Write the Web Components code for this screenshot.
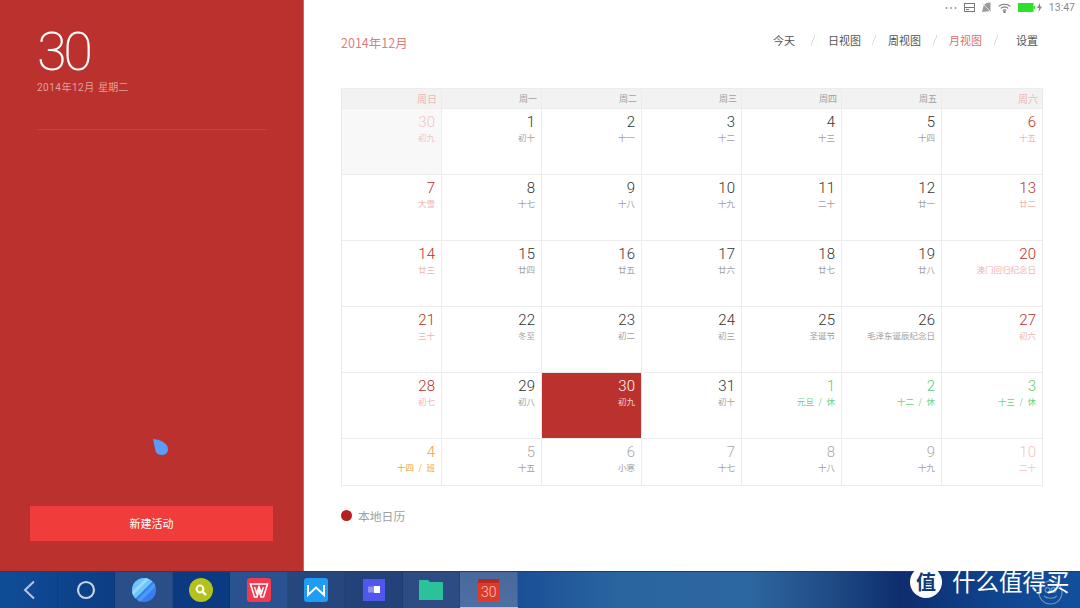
<!DOCTYPE html>
<html lang="zh-CN">

<head>
    <meta charset="UTF-8">
    <title>Calendar</title>
    <style>
        html, body { margin: 0; padding: 0; background: #fff; }
        body { font-family: "Liberation Sans", "Noto Sans CJK SC", sans-serif; }
        section { flex: 1; min-width: 0; display: flex; flex-direction: column; }
        .content { padding: 15px 37px 0; }
    </style>
</head>

<body>
    <template id="side-panel-template">
        <style>
            :host { display: flex; flex-direction: column; position: relative; width: 304px; flex: none; background: #bb312d; border-right: 1px solid #d9605c; color: #fff; box-sizing: border-box; padding: 0 30px 30px 37px; }
            .big { font: 200 54px/1 Roboto, sans-serif; letter-spacing: -3.5px; margin-top: 25px; height: 54px; }
            .date { font: 10px/14px Roboto, "Noto Sans CJK SC", sans-serif; color: #e0a09d; margin-top: 2px; }
            .date span { letter-spacing: 0.5px; margin-right: 1px; }
            hr { border: 0; height: 1px; background: #c5433f; margin: 34px 6px 0 0; }
            button { margin: auto 0 0 -7px; height: 35px; width: 243px; border: 0; background: #f03c3a; color: #fff; font: 11px "Noto Sans CJK SC", sans-serif; padding: 0 0 2px; }
            svg { position: absolute; left: 152px; top: 438px; }
        </style>
        <div class="big"><slot name="day"></slot></div>
        <div class="date"><span><slot name="date"></slot></span> <slot name="weekday"></slot></div>
        <hr>
        <svg width="17" height="18" viewBox="0 0 17 18"><path d="M1 1 C6 1.5 16 4 16 11 C16 15 13 17 9.5 17 C5.5 17 3.5 14 3 11 C2.5 7.5 1.5 4 1 1Z" fill="#5b9cf8"/></svg>
        <button><slot name="action"></slot></button>
    </template>

    <template id="status-bar-template">
        <style>
            :host { display: flex; justify-content: flex-end; align-items: center; height: 15px; padding-right: 5px; font: 10.5px Roboto, sans-serif; color: #8a8a8a; }
            svg { display: block; }
            .dots { margin-right: 7px; }
            .sim { margin-right: 6px; }
            .mute { margin-right: 6px; }
            .wifi { margin-right: 7px; }
            .bat { margin-right: 2px; }
            .bolt { margin-right: 7px; }
        </style>
        <svg class="dots" width="12" height="4" viewBox="0 0 12 4" fill="#999"><circle cx="1.5" cy="2" r="1"/><circle cx="6" cy="2" r="1"/><circle cx="10.5" cy="2" r="1"/></svg>
        <svg class="sim" width="11" height="9" viewBox="0 0 11 9"><rect x=".5" y=".5" width="10" height="8" fill="none" stroke="#777"/><rect x="1" y="4" width="9" height="1" fill="#777"/><rect x="2" y="6" width="3" height="1" fill="#777"/></svg>
        <svg class="mute" width="11" height="11" viewBox="0 0 11 11"><path d="M1 10 L2.500 4 C3.500 1.500 6 .5 9.500 .5 L9.500 9 Z" fill="#999"/><path d="M1 1 L10 10" stroke="#e2e2e2"/></svg>
        <svg class="wifi" width="13" height="10" viewBox="0 0 13 10" fill="none" stroke="#777" stroke-width="1.2"><path d="M.7 3.4 C4 .5 9 .5 12.3 3.4"/><path d="M2.7 5.4 C5 3.6 8 3.6 10.3 5.4"/><path d="M4.7 7.4 C5.8 6.6 7.2 6.6 8.3 7.4"/><circle cx="6.5" cy="9" r=".6" fill="#777"/></svg>
        <svg class="bat" width="17" height="9" viewBox="0 0 17 9"><rect width="15.5" height="9" fill="#2ee02a"/><rect x="15.5" y="3" width="1.5" height="3" fill="#2ee02a"/></svg>
        <svg class="bolt" width="5" height="9" viewBox="0 0 5 9"><path d="M3 0 L0 5 H2 L1.5 9 L5 3.5 H3Z" fill="#888"/></svg>
        <span><slot></slot></span>
    </template>

    <template id="top-nav-template">
        <style>
            :host { display: flex; justify-content: space-between; align-items: center; height: 24px; }
            .title { font: 12.5px "Noto Sans CJK SC", sans-serif; color: #dc7f7b; }
            nav { display: flex; align-items: center; padding: 0 5px 4px 0; font: 11px "Noto Sans CJK SC", sans-serif; color: #555; }
            i { display: block; width: 4px; height: 10px; background: linear-gradient(to bottom right, transparent 44%, #ddd 44%, #ddd 58%, transparent 58%); }
            .on { color: #d8716d; }
        </style>
        <span class="title"><slot name="title"></slot></span>
        <nav>
            <span>今天</span><i style="margin:0 13px 0 16px"></i>
            <span>日视图</span><i style="margin:0 12px 0 11px"></i>
            <span>周视图</span><i style="margin:0 12px"></i>
            <span class="on">月视图</span><i style="margin:0 18px 0 12px"></i>
            <span>设置</span>
        </nav>
    </template>

    <template id="day-cell-template">
        <style>
            :host { display: block; box-sizing: border-box; text-align: right; padding: 4px 6px 0 0; overflow: hidden; white-space: nowrap; border-right: 1px solid #ececec; border-bottom: 1px solid #ececec; color: #333; }
            .n { font: 300 15px/18px Roboto, sans-serif; }
            .s { font: 8.5px/12px "Noto Sans CJK SC", sans-serif; color: #a0a0a0; word-spacing: .4px; }
            :host([tone=red]) { color: #b9302c; }
            :host([tone=red]) .s { color: #f0b4b1; }
            :host([tone=old]) { color: #a8a8a8; }
            :host([tone=pale]) { color: #eec6c4; }
            :host([tone=pale]) .s { color: #eec6c4; }
            :host([tone=prev]) { color: #eec6c4; background: #f8f8f8; }
            :host([tone=prev]) .s { color: #eec6c4; }
            :host([tone=rest]) { color: #5fc975; }
            :host([tone=rest]) .s { color: #6fd085; }
            :host([tone=work]) { color: #f0a33a; }
            :host([tone=work]) .s { color: #f0a33a; }
            :host([tone=today]) { color: #fff; background: #bb312d; }
            :host([tone=today]) .s { color: #f4d5d3; }
            :host(.last) { border-right: 0; }
        </style>
        <div class="n"></div>
        <div class="s"><slot></slot></div>
    </template>

    <template id="month-grid-template">
        <style>
            :host { display: grid; grid-template-columns: repeat(7, 1fr); grid-template-rows: 20px repeat(5, 66px) 47px; width: 702px; box-sizing: border-box; margin-top: 34px; border: 1px solid #ececec; border-width: 1px 1px 0 1px; }
            .h { background: #f2f2f2; border-right: 1px solid #ececec; border-bottom: 1px solid #ececec; text-align: right; padding-right: 4px; font: 9px/19px "Noto Sans CJK SC", sans-serif; color: #a0a0a0; }
            .h:nth-child(8) { border-right: 0; }
            .h.we { font-size: 10px; color: #eeb9b6; }
        </style>
        <slot></slot>
    </template>

    <template id="legend-row-template">
        <style>
            :host { display: flex; align-items: center; margin-top: 21px; font: 11.8px "Noto Sans CJK SC", sans-serif; color: #a0a0a0; height: 16px; }
            i { width: 11px; height: 11px; border-radius: 50%; background: #b2201f; margin-right: 6px; }
        </style>
        <i></i><slot></slot>
    </template>

    <template id="task-icon-template">
        <style>
            :host { display: flex; align-items: center; justify-content: center; width: 57.5px; height: 100%; flex: none; background: var(--bg, none); box-shadow: inset -1px 0 0 rgba(10, 30, 80, .18); box-sizing: border-box; }
            :host([active]) { background: linear-gradient(#48699b, #4d6fa3); border-bottom: 1px solid #b9c6db; }
        </style>
        <slot></slot>
    </template>

    <template id="task-bar-template">
        <style>
            :host { display: flex; position: relative; height: 37px; flex: none; background: linear-gradient(90deg, #0f4d98 0, #0c3f86 100px, #0a397e 170px, #27508e 240px, #274a84 340px, #26528f 450px, #1a5097 520px, #2b659f 620px, #2d66a0 750px, #1f4a84 833px, #0d2d6e 900px, #0f4590 1000px, #12509c 1080px); border-top: 1px solid #1c3f78; box-sizing: border-box; }
            .mark { position: absolute; left: 910px; top: -6px; width: 32px; height: 32px; border-radius: 50%; background: #fff; color: #123a7c; font: 700 20px/32px "Noto Sans CJK SC", sans-serif; text-align: center; }
            .name { position: absolute; left: 952px; top: -7px; font: 400 23.5px/32px "Noto Sans CJK SC", sans-serif; color: #fff; white-space: nowrap; }
            .ring { position: absolute; right: 17px; top: 8px; width: 25px; height: 25px; }
        </style>
        <slot></slot>
        <span class="mark">值</span>
        <span class="name">什么值得买</span>
        <svg class="ring" viewBox="0 0 25 25" fill="none" stroke="#fff" stroke-opacity=".4" stroke-width="1.2"><circle cx="12.5" cy="12.5" r="11.5"/><circle cx="9.5" cy="10" r="2.4"/><circle cx="15.5" cy="10" r="2.4"/><path d="M6 16 C9 19 16 19 19 16"/></svg>
    </template>

    <cal-app-root>
        <div slot="main">
            <side-panel>
                <span slot="day">30</span>
                <span slot="date">2014年12月</span>
                <span slot="weekday">星期二</span>
                <span slot="action">新建活动</span>
            </side-panel>
            <section>
                <status-bar>13:47</status-bar>
                <div class="content">
                    <top-nav><span slot="title">2014年12月</span></top-nav>
                    <month-grid></month-grid>
                    <legend-row>本地日历</legend-row>
                </div>
            </section>
        </div>
        <task-bar slot="bar">
            <task-icon>
                <svg width="14" height="20" viewBox="0 0 14 20" fill="none" stroke="#b9c7de" stroke-width="2"><path d="M12 1.5 L3 10 L12 18.5"/></svg>
            </task-icon>
            <task-icon>
                <svg width="20" height="20" viewBox="0 0 20 20" fill="none" stroke="#c5d1e4" stroke-width="2.2"><circle cx="10" cy="10" r="8"/></svg>
            </task-icon>
            <task-icon style="--bg:#2a4f88">
                <svg width="24" height="24" viewBox="0 0 24 24"><defs><clipPath id="c1"><circle cx="12" cy="12" r="12"/></clipPath></defs><g clip-path="url(#c1)"><rect width="24" height="24" fill="#3b7cf2"/><path d="M0 24 L24 0 H0Z" fill="#6cc6fa"/><path d="M3 24 L24 3 V8 L8 24Z" fill="#4a9bf5"/><path d="M0 14 L14 0 H18 L0 18Z" fill="#9adcfb"/></g></svg>
            </task-icon>
            <task-icon style="--bg:#0b3a80">
                <svg width="24" height="24" viewBox="0 0 24 24"><circle cx="12" cy="12" r="12" fill="#b5c21c"/><circle cx="11" cy="11" r="3.4" fill="none" stroke="#fff" stroke-width="2"/><path d="M13.5 13.5 L17 17" stroke="#fff" stroke-width="2.2"/></svg>
            </task-icon>
            <task-icon style="--bg:#2a5290">
                <svg width="24" height="24" viewBox="0 0 24 24"><rect width="24" height="24" rx="3" fill="#f13a4e"/><path d="M3.5 6 H20.5 L16.5 19 H14 L12 12 L10 19 H7.500Z" fill="none" stroke="#fff" stroke-width="1.6"/><path d="M7.5 9 L9.500 15 L12 8.500 L14.500 15 L16.500 9" fill="none" stroke="#fff" stroke-width="1.500"/></svg>
            </task-icon>
            <task-icon style="--bg:#26467e">
                <svg width="24" height="24" viewBox="0 0 24 24"><rect width="24" height="24" rx="3" fill="#1f9cf5"/><path d="M4 7 L4 17 L12 9.500 L20 17 L20 7" fill="none" stroke="#fff" stroke-width="2"/></svg>
            </task-icon>
            <task-icon style="--bg:#23427a">
                <svg width="22" height="22" viewBox="0 0 22 22"><rect width="22" height="22" fill="#5057ec"/><rect x="5" y="7.500" width="6" height="6" fill="#8e92f5"/><rect x="11" y="7" width="6" height="7" fill="#fff"/></svg>
            </task-icon>
            <task-icon style="--bg:#2c4c83">
                <svg width="24" height="20" viewBox="0 0 24 20"><path d="M0 1 Q0 0 1 0 H9 L11 2 H23 Q24 2 24 3 V20 H0Z" fill="#2bc29b"/></svg>
            </task-icon>
            <task-icon active>
                <cal-badge>30</cal-badge>
            </task-icon>
        </task-bar>
    </cal-app-root>

    <script type="module">
        function shadowFrom(el, id) {
            const root = el.attachShadow({ mode: 'open' });
            root.appendChild(document.getElementById(id).content.cloneNode(true));
            return root;
        }

        class CalAppRoot extends HTMLElement {
            constructor() {
                super();
                this.attachShadow({ mode: 'open' }).innerHTML = `
                    <style>
                        :host { display: flex; flex-direction: column; width: 1080px; height: 608px; overflow: hidden; }
                        ::slotted([slot=main]) { display: flex; flex: 1; min-height: 0; }
                    </style>
                    <slot name="main"></slot>
                    <slot name="bar"></slot>`;
            }
        }

        class SidePanel extends HTMLElement {
            constructor() { super(); shadowFrom(this, 'side-panel-template'); }
        }

        class StatusBar extends HTMLElement {
            constructor() { super(); shadowFrom(this, 'status-bar-template'); }
        }

        class TopNav extends HTMLElement {
            constructor() { super(); shadowFrom(this, 'top-nav-template'); }
        }

        class DayCell extends HTMLElement {
            constructor() { super(); shadowFrom(this, 'day-cell-template'); }
            connectedCallback() {
                this.shadowRoot.querySelector('.n').textContent = this.getAttribute('n');
            }
        }

        // n, lunar text, tone
        const DAYS = [
            ['30', '初九', 'prev'], ['1', '初十'], ['2', '十一'], ['3', '十二'], ['4', '十三'], ['5', '十四'], ['6', '十五', 'red'],
            ['7', '大雪', 'red'], ['8', '十七'], ['9', '十八'], ['10', '十九'], ['11', '二十'], ['12', '廿一'], ['13', '廿二', 'red'],
            ['14', '廿三', 'red'], ['15', '廿四'], ['16', '廿五'], ['17', '廿六'], ['18', '廿七'], ['19', '廿八'], ['20', '澳门回归纪念日', 'red'],
            ['21', '三十', 'red'], ['22', '冬至'], ['23', '初二'], ['24', '初三'], ['25', '圣诞节'], ['26', '毛泽东诞辰纪念日'], ['27', '初六', 'red'],
            ['28', '初七', 'red'], ['29', '初八'], ['30', '初九', 'today'], ['31', '初十'], ['1', '元旦 &nbsp;/&nbsp; 休', 'rest'], ['2', '十二 &nbsp;/&nbsp; 休', 'rest'], ['3', '十三 &nbsp;/&nbsp; 休', 'rest'],
            ['4', '十四 &nbsp;/&nbsp; 班', 'work'], ['5', '十五', 'old'], ['6', '小寒', 'old'], ['7', '十七', 'old'], ['8', '十八', 'old'], ['9', '十九', 'old'], ['10', '二十', 'pale'],
        ];

        class MonthGrid extends HTMLElement {
            constructor() {
                super();
                const root = shadowFrom(this, 'month-grid-template');
                const slot = root.querySelector('slot');
                ['周日', '周一', '周二', '周三', '周四', '周五', '周六'].forEach((w, i) => {
                    const h = document.createElement('div');
                    h.className = (i == 0 || i == 6) ? 'h we' : 'h';
                    h.textContent = w;
                    root.insertBefore(h, slot);
                });
            }
            connectedCallback() {
                DAYS.forEach(([n, sub, tone], i) => {
                    const c = document.createElement('day-cell');
                    c.setAttribute('n', n);
                    if (tone) c.setAttribute('tone', tone);
                    if (i % 7 == 6) c.className = 'last';
                    c.innerHTML = sub;
                    this.appendChild(c);
                });
            }
        }

        class LegendRow extends HTMLElement {
            constructor() { super(); shadowFrom(this, 'legend-row-template'); }
        }

        class TaskBar extends HTMLElement {
            constructor() { super(); shadowFrom(this, 'task-bar-template'); }
        }

        class TaskIcon extends HTMLElement {
            constructor() { super(); shadowFrom(this, 'task-icon-template'); }
        }

        class CalBadge extends HTMLElement {
            constructor() {
                super();
                this.attachShadow({ mode: 'open' }).innerHTML = `
                    <style>
                        :host { display: flex; align-items: flex-end; justify-content: center; box-sizing: border-box; width: 21px; height: 22px; background: #de3a2b; border-top: 4px solid #b82a20; color: #f6c9c2; font: 300 14px/17px Roboto, sans-serif; }
                    </style>
                    <slot></slot>`;
            }
        }

        customElements.define('cal-app-root', CalAppRoot);
        customElements.define('side-panel', SidePanel);
        customElements.define('status-bar', StatusBar);
        customElements.define('top-nav', TopNav);
        customElements.define('day-cell', DayCell);
        customElements.define('month-grid', MonthGrid);
        customElements.define('legend-row', LegendRow);
        customElements.define('task-bar', TaskBar);
        customElements.define('task-icon', TaskIcon);
        customElements.define('cal-badge', CalBadge);
    </script>
</body>

</html>
